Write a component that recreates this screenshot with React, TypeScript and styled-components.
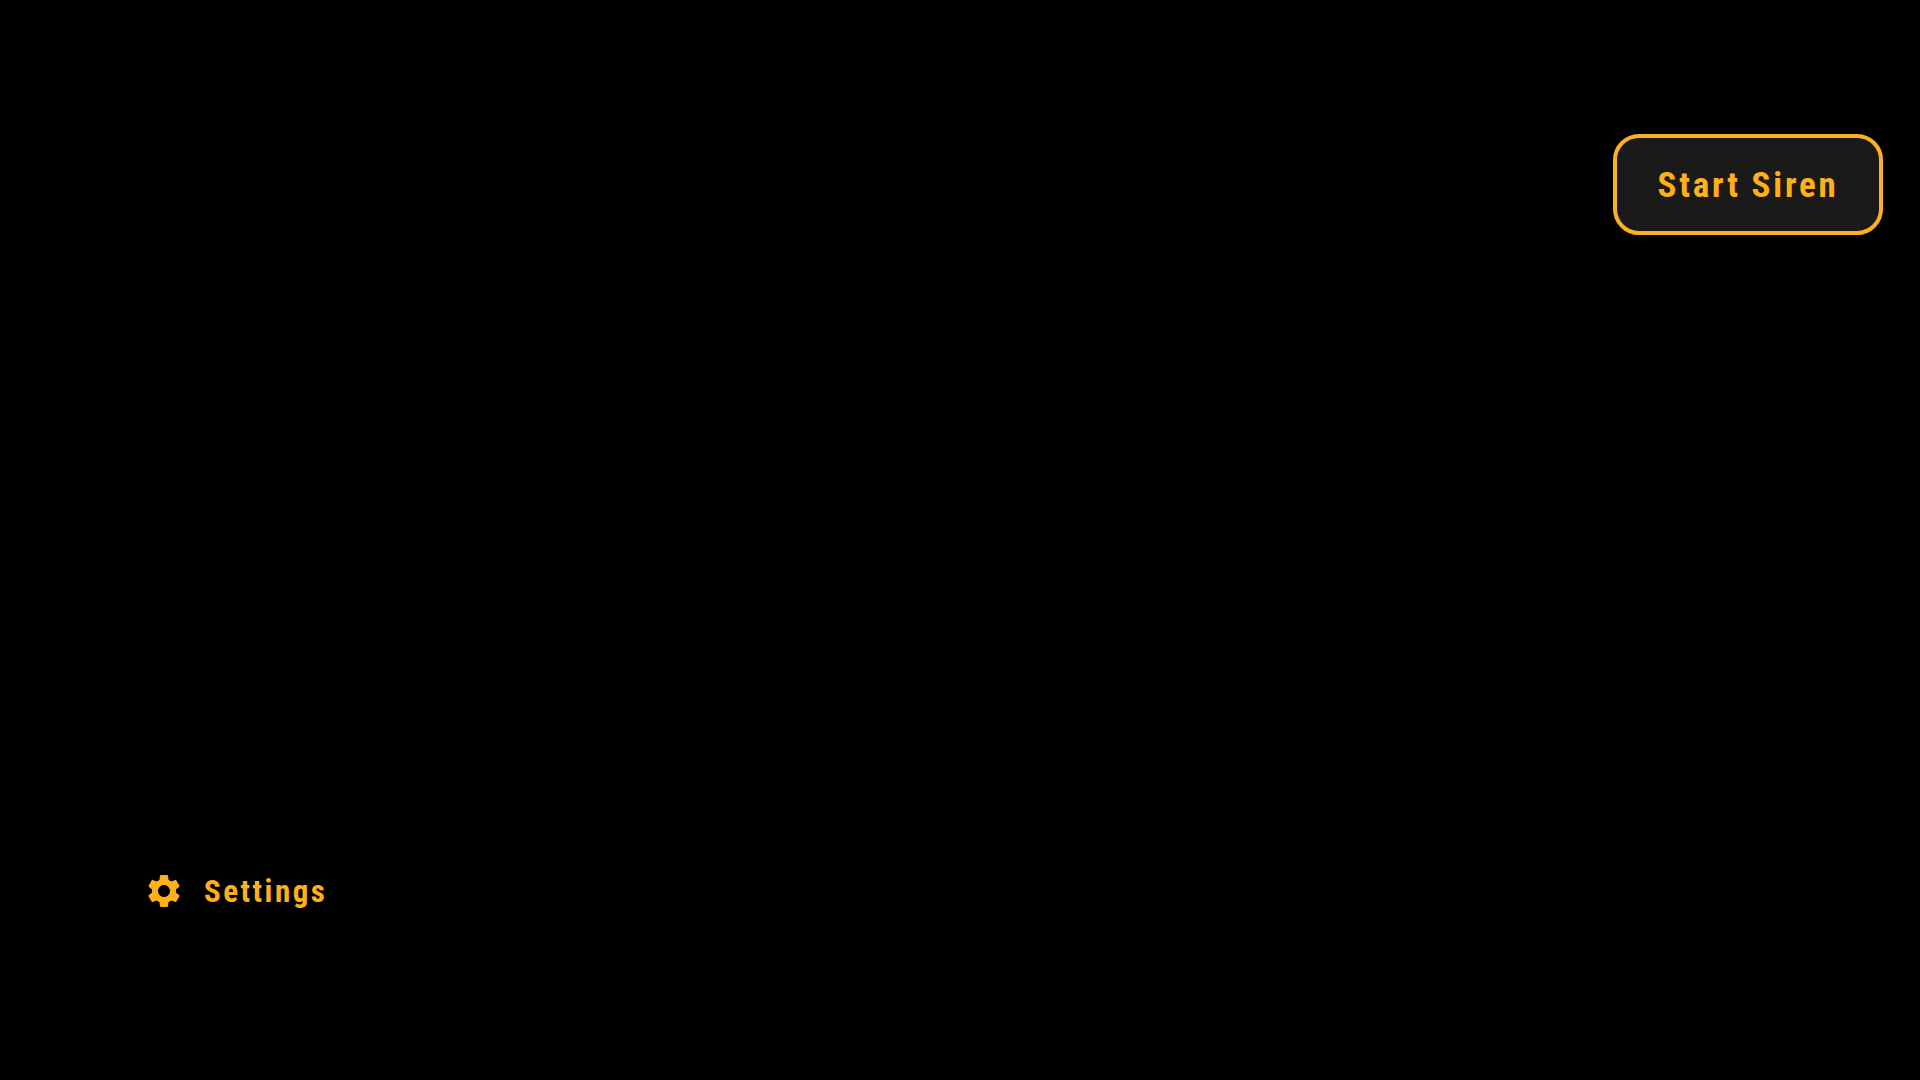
import React from "react";
import styled, { createGlobalStyle } from "styled-components";

const Global = createGlobalStyle`
  html, body { margin: 0; padding: 0; background: #000; }
  #root { height: 100vh; }
`;

const Page = styled.main`
  box-sizing: border-box;
  height: 100vh;
  padding: 134px 37px 169px 144px;
  display: flex;
  flex-direction: column;
  justify-content: space-between;
  background: #000;
  font-family: Roboto, "Liberation Sans", sans-serif;
  font-stretch: 80%;
  color: #ffb016;
`;

const TopBar = styled.div`
  display: flex;
  justify-content: flex-end;
`;

const SirenButton = styled.button`
  box-sizing: border-box;
  width: 270px;
  height: 101px;
  border: 4px solid #fbb021;
  border-radius: 26px;
  background: #1a1a1a;
  color: #ffb016;
  font-family: inherit;
  font-stretch: inherit;
  font-size: 35px;
  font-weight: 700;
  letter-spacing: 2.8px;
  padding: 2px 0 0;
`;

const SettingsRow = styled.div`
  display: flex;
  align-items: center;
  gap: 20px;
  height: 40px;
`;

const SettingsLabel = styled.span`
  font-size: 31px;
  font-weight: 700;
  letter-spacing: 2.5px;
`;

const GearIcon = () => (
  <svg width="40" height="40" viewBox="0 0 24 24" fill="currentColor" aria-hidden="true">
    <path d="M19.14 12.94c.04-.3.06-.61.06-.94 0-.32-.02-.64-.07-.94l2.03-1.58a.49.49 0 0 0 .12-.61l-1.92-3.32a.488.488 0 0 0-.59-.22l-2.39.96c-.5-.38-1.03-.7-1.62-.94l-.36-2.54a.484.484 0 0 0-.48-.41h-3.84c-.24 0-.43.17-.47.41l-.36 2.54c-.59.24-1.13.57-1.62.94l-2.39-.96c-.22-.08-.47 0-.59.22L2.74 8.87c-.12.21-.08.47.12.61l2.03 1.58c-.05.3-.09.63-.09.94s.02.64.07.94l-2.03 1.58a.49.49 0 0 0-.12.61l1.92 3.32c.12.22.37.29.59.22l2.39-.96c.5.38 1.03.7 1.62.94l.36 2.54c.05.24.24.41.48.41h3.84c.24 0 .44-.17.47-.41l.36-2.54c.59-.24 1.13-.56 1.62-.94l2.39.96c.22.08.47 0 .59-.22l1.92-3.32c.12-.22.07-.47-.12-.61l-2.01-1.58zM12 15.6c-1.98 0-3.6-1.62-3.6-3.6s1.62-3.6 3.6-3.6 3.6 1.62 3.6 3.6-1.62 3.6-3.6 3.6z" />
  </svg>
);

export default function App() {
  return (
    <Page>
      <Global />
      <TopBar>
        <SirenButton>Start Siren</SirenButton>
      </TopBar>
      <SettingsRow>
        <GearIcon />
        <SettingsLabel>Settings</SettingsLabel>
      </SettingsRow>
    </Page>
  );
}
